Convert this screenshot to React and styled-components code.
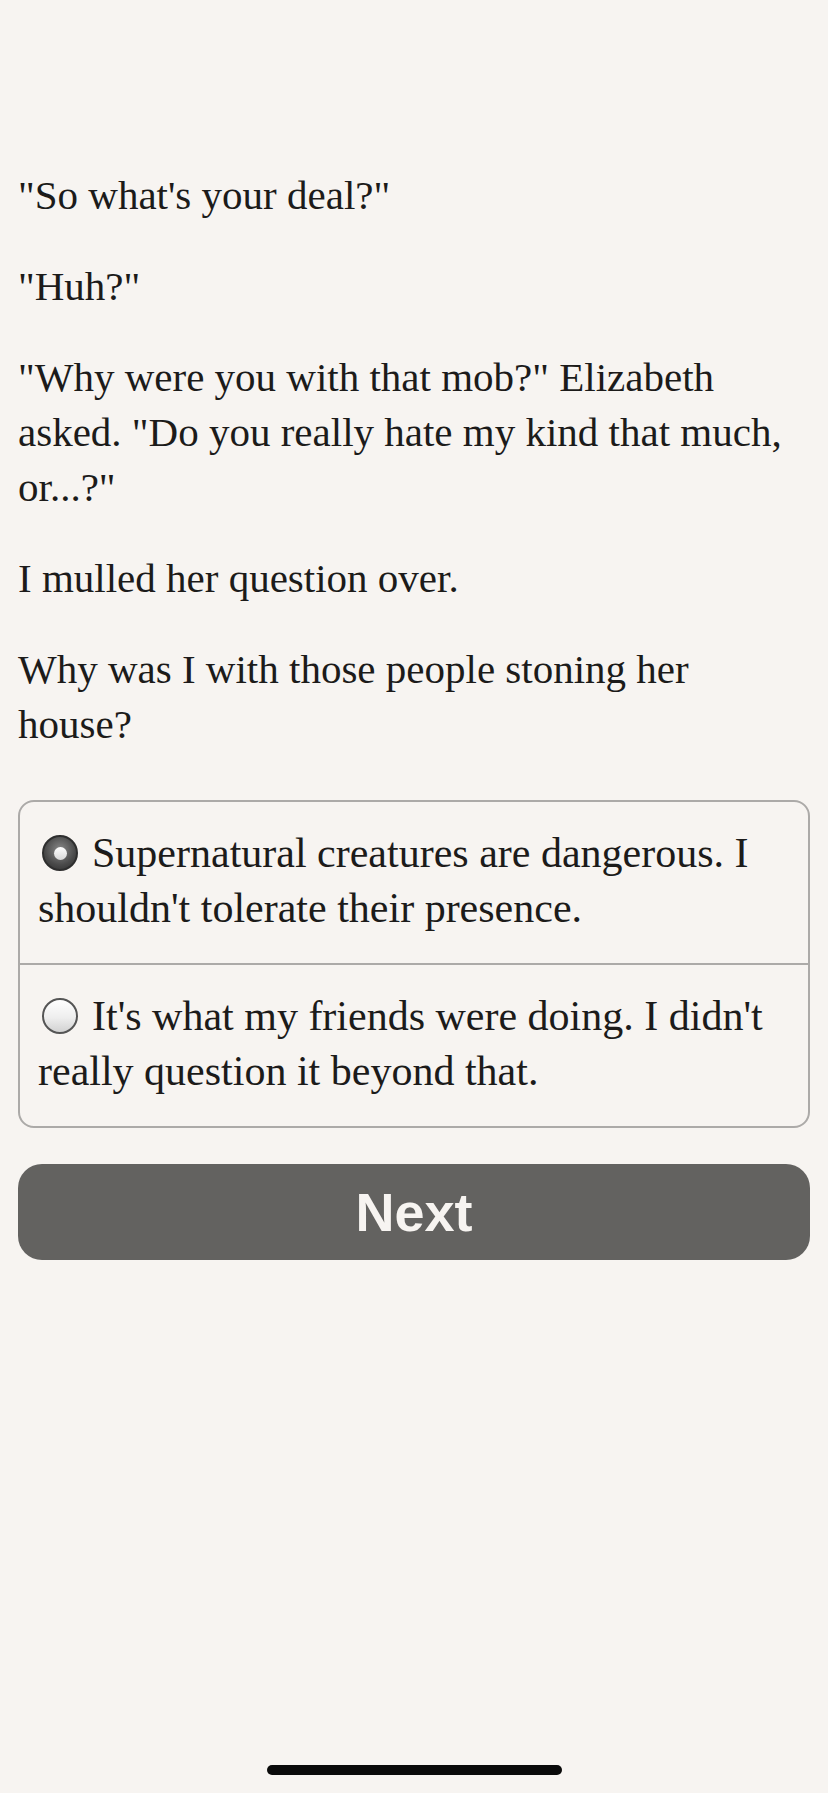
import React, { useState } from 'react';
import styled, { createGlobalStyle } from 'styled-components';

const GlobalStyle = createGlobalStyle`
	html, body {
		margin: 0;
		padding: 0;
		background: #f7f4f1;
	}
	body {
		font-family: 'Liberation Serif', 'Times New Roman', serif;
		color: #1c1b1a;
	}
`;

const Screen = styled.div`
	min-height: 1793px;
	box-sizing: border-box;
	padding: 168px 18px 0;
	display: flex;
	flex-direction: column;
	position: relative;
`;

const Story = styled.div`
	display: flex;
	flex-direction: column;
	gap: 36px;
`;

const Paragraph = styled.p`
	margin: 0;
	font-size: 41px;
	line-height: 55px;
	padding-right: 16px;
`;

const Choices = styled.div`
	margin-top: 48px;
	border: 2px solid #acaaa8;
	border-radius: 16px;
	overflow: hidden;
`;

const Choice = styled.label`
	display: block;
	padding: 24px 18px 27px;
	font-size: 42px;
	line-height: 55px;
	cursor: pointer;
	& + & {
		border-top: 2px solid #acaaa8;
	}
`;

const Radio = styled.span`
	display: inline-block;
	box-sizing: border-box;
	width: 36px;
	height: 36px;
	border-radius: 50%;
	margin: 0 14px 0 4px;
	vertical-align: -4px;
	position: relative;
	border: 2px solid ${(p) => (p.$checked ? '#2e2e2e' : '#555')};
	background: ${(p) =>
		p.$checked
			? 'radial-gradient(circle at 50% 40%, #8a8a8a 0%, #4a4a4a 60%, #2c2c2c 100%)'
			: 'linear-gradient(180deg, #ffffff 0%, #eeeeee 55%, #d2d2d2 100%)'};
	&::after {
		content: '';
		display: ${(p) => (p.$checked ? 'block' : 'none')};
		position: absolute;
		left: 50%;
		top: 50%;
		width: 13px;
		height: 13px;
		margin: -6.5px 0 0 -6.5px;
		border-radius: 50%;
		background: linear-gradient(180deg, #ffffff 0%, #d8d8d8 100%);
	}
`;

const NextButton = styled.button`
	margin-top: 36px;
	height: 96px;
	border: none;
	border-radius: 24px;
	background: #636260;
	color: #f7f4f1;
	font-family: 'Liberation Sans', Arial, sans-serif;
	font-weight: 700;
	font-size: 54px;
	cursor: pointer;
`;

const HomeIndicator = styled.div`
	position: absolute;
	left: 267px;
	bottom: 18px;
	width: 295px;
	height: 10px;
	border-radius: 5px;
	background: #0a0a0a;
`;

const paragraphs = [
	'"So what\'s your deal?"',
	'"Huh?"',
	'"Why were you with that mob?" Elizabeth asked. "Do you really hate my kind that much, or...?"',
	'I mulled her question over.',
	'Why was I with those people stoning her house?',
];

const options = [
	"Supernatural creatures are dangerous. I shouldn't tolerate their presence.",
	"It's what my friends were doing. I didn't really question it beyond that.",
];

const App = () => {
	const [choice, setChoice] = useState(0);
	return (
		<>
			<GlobalStyle />
			<Screen>
				<Story>
					{paragraphs.map((text, i) => (
						<Paragraph key={i}>{text}</Paragraph>
					))}
				</Story>
				<Choices>
					{options.map((text, i) => (
						<Choice key={i} onClick={() => setChoice(i)}>
							<Radio $checked={choice === i} />
							{text}
						</Choice>
					))}
				</Choices>
				<NextButton>Next</NextButton>
				<HomeIndicator />
			</Screen>
		</>
	);
};

export default App;
